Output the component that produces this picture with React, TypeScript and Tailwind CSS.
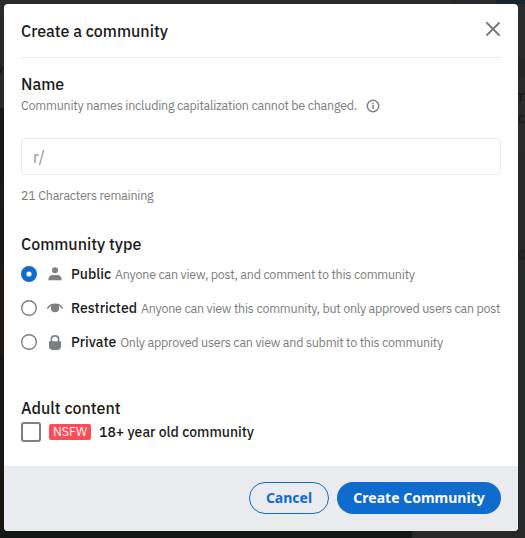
import type { ReactNode } from "react";

const plex = "font-['IBM_Plex_Sans',Roboto,sans-serif]";

function Backdrop() {
  return (
    <div aria-hidden="true" className="absolute inset-0 flex flex-col font-['Noto_Sans',sans-serif] text-[14px] text-[#151515]">
      <div className="flex h-1 shrink-0">
        <div className="w-[412px] bg-[#2b2b2b]" />
        <div className="w-[40px] bg-[#2b2b2b]" />
        <div className="w-[26px] bg-[#25282c]" />
        <div className="w-[18px] bg-[#2b2b2b]" />
        <div className="flex-1 rounded-bl bg-[#18242f]" />
      </div>
      <div className="flex min-h-0 flex-1 justify-between">
        <div className="flex w-2 flex-col">
          <div className="h-[14px] bg-[#2b2b2b]" />
          <div className="flex h-[90px] items-center overflow-hidden bg-[#2b2926]">
            <span className="-ml-1.5 mt-3 text-[18px]">y</span>
          </div>
          <div className="h-[74px] bg-[#191715]" />
          <div className="h-[24px] bg-[#181b1c]" />
          <div className="h-[60px] bg-[#171716]" />
          <div className="h-[90px] bg-[#1e1914]" />
          <div className="flex-1 bg-[#1a1613]" />
        </div>
        <div className="flex w-[7px] flex-col overflow-hidden bg-[#292b2b]">
          <div className="h-[11px] shrink-0 border-b border-[#1c2f43] bg-[#2b2b2b]" />
          <div className="h-[31px] shrink-0 border-b border-[#1c2f43] bg-[#2b2b2b]" />
          <div className="h-[13px] shrink-0 bg-[#2b2b2b]" />
          <div className="h-[18px] shrink-0 bg-[#252626]" />
          <div className="flex h-[75px] shrink-0 flex-col bg-[#2b2b2b] pt-[9px]">
            <span className="-ml-1 leading-[20px]">m</span>
            <span className="leading-[24px]">cy</span>
          </div>
          <div className="flex h-[116px] shrink-0 items-end bg-[#292929] text-[12px] leading-[24px]">©</div>
          <div className="flex-1 bg-[#272a2b]" />
        </div>
      </div>
      <div className="flex h-2 shrink-0">
        <div className="w-[412px] bg-[#151716]" />
        <div className="flex-1 bg-[#292929]" />
      </div>
    </div>
  );
}

function UserIcon() {
  return (
    <svg width="14" height="14" viewBox="0 0 14 14" fill="#7c7f82">
      <circle cx="7" cy="3.2" r="3" />
      <path d="M.5 13.3v-1.1c0-2.5 1.6-4.2 4-4.2h5c2.4 0 4 1.7 4 4.2v1.1z" />
    </svg>
  );
}

function EyeIcon() {
  return (
    <svg width="16" height="10" viewBox="0 0 16 10" fill="none">
      <path d="M.7 5.2C2 2.6 4.7 1.2 8 1.2s6 1.4 7.3 4" stroke="#7c7f82" strokeWidth="1.4" strokeLinecap="round" />
      <circle cx="8" cy="5.2" r="4.1" fill="#7c7f82" />
    </svg>
  );
}

function LockIcon() {
  return (
    <svg width="12" height="15" viewBox="0 0 12 15" fill="none">
      <path d="M2.4 7V4.2C2.4 2.2 4 .9 6 .9s3.6 1.3 3.6 3.3V7" stroke="#7c7f82" strokeWidth="1.6" />
      <path d="M0 6.2h12v4.9A3.9 3.9 0 0 1 8.1 15H3.9A3.9 3.9 0 0 1 0 11.1z" fill="#7c7f82" />
    </svg>
  );
}

function Radio({ checked }: { checked?: boolean }) {
  return (
    <svg width="16" height="16" viewBox="0 0 16 16" fill="none">
      {checked ? (
        <circle cx="8" cy="8" r="5.3" stroke="#0f6bce" strokeWidth="5.4" />
      ) : (
        <circle cx="8" cy="8" r="7.3" stroke="#7c7f82" strokeWidth="1.4" />
      )}
    </svg>
  );
}

function TypeRow({ checked, icon, name, children }: { checked?: boolean; icon: ReactNode; name: string; children: ReactNode }) {
  return (
    <div className="flex h-[34px] items-center whitespace-nowrap">
      <Radio checked={checked} />
      <span className="mx-[10px] flex w-4 justify-center">{icon}</span>
      <span className="ml-[-2px] text-[14px] font-medium text-[#1c1c1c]">{name}</span>
      <span className="ml-1 pb-px text-[12.5px] leading-4 tracking-[-0.235px] text-[#7c7c7c]">{children}</span>
    </div>
  );
}

export default function App() {
  return (
    <div className="relative h-[538px] w-[525px] overflow-hidden bg-[#202020]">
      <Backdrop />
      <div className={`absolute left-1 top-1 flex h-[527px] w-[514px] flex-col overflow-hidden rounded bg-white text-[#1c1c1c] ${plex}`}>
        <div className="flex flex-1 flex-col px-[17px]">
          <header className="flex h-[54px] shrink-0 items-center justify-between border-b border-[#e9eaec]">
            <h1 className="text-[16px] font-medium leading-5">Create a community</h1>
            <svg className="mr-[1px] mb-1" width="14" height="14" viewBox="0 0 14 14" stroke="#747678" strokeWidth="1.8" strokeLinecap="round">
              <path d="M1 1l12 12M13 1L1 13" />
            </svg>
          </header>
          <h2 className="mt-4 text-[16px] font-medium leading-5">Name</h2>
          <div className="mt-1 flex h-4 items-center leading-4 text-[#7c7c7c]">
            <span className="pb-0.5 text-[12.5px] tracking-[-0.235px]">Community names including capitalization cannot be changed.</span>
            <svg className="ml-[9px]" width="14" height="14" viewBox="0 0 14 14" fill="none" stroke="#7c7f82" strokeWidth="1.5">
              <circle cx="7" cy="7" r="5.7" />
              <path d="M7 6v4M7 3.8v1.4" />
            </svg>
          </div>
          <div className="mt-6 flex h-[37px] shrink-0 items-center rounded border border-[#e9eaec] px-[11px] text-[16px] text-[#929496]">r/</div>
          <p className="mt-3 text-[12.5px] leading-4 tracking-[-0.235px] text-[#7c7c7c]">21 Characters remaining</p>
          <h2 className="mt-[31px] text-[16px] font-medium leading-5">Community type</h2>
          <div className="mt-[3px]">
            <TypeRow checked icon={<UserIcon />} name="Public">
              Anyone can view, post, and comment to this community
            </TypeRow>
            <TypeRow icon={<EyeIcon />} name="Restricted">
              Anyone can view this community, but only approved users can post
            </TypeRow>
            <TypeRow icon={<LockIcon />} name="Private">
              Only approved users can view and submit to this community
            </TypeRow>
          </div>
          <h2 className="mt-[39px] text-[16px] font-medium leading-5">Adult content</h2>
          <div className="mt-1 flex h-5 items-center">
            <span className="size-5 rounded-[3px] border-2 border-[#7c7f82]" />
            <span className="ml-2 flex h-4 w-[42px] items-center justify-center rounded-[2px] bg-[#ff4b55] pb-0.5 text-[12.5px] leading-4 text-white">NSFW</span>
            <span className="ml-2 text-[14px] font-medium">18+ year old community</span>
          </div>
        </div>
        <footer className="flex h-[65px] shrink-0 items-center justify-end gap-2 bg-[#eaebef] pb-px pr-[17px] font-['Noto_Sans',sans-serif] text-[14px] font-bold">
          <button className="h-8 w-20 rounded-full border border-[#0f6bce] pb-0.5 text-[#0f6bce]">Cancel</button>
          <button className="h-8 w-[164px] rounded-full bg-[#0f6bce] pb-0.5 text-white">Create Community</button>
        </footer>
      </div>
    </div>
  );
}
